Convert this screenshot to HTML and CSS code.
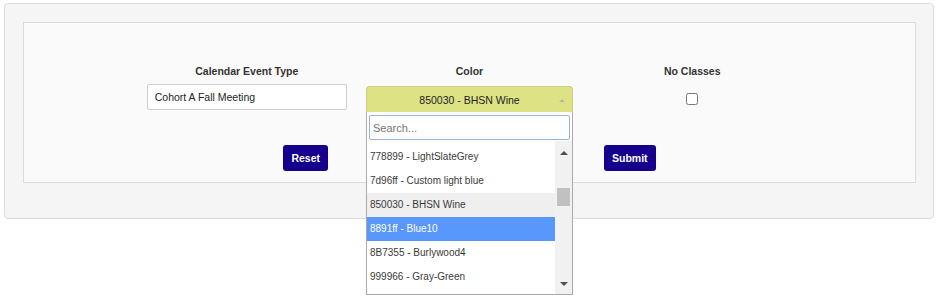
FILE: index.html
```html
<!DOCTYPE html>
<html lang="en">
<head>
    <meta charset="UTF-8">
    <meta name="viewport" content="width=device-width, initial-scale=1.0">
    <title>Calendar Event Type</title>
    <link rel="stylesheet" href="styles.css">
</head>
<body>

    <div class="panel">
        <div class="box">

            <div class="fields">

                <div class="field">
                    <label class="field-label">Calendar Event Type</label>
                    <input class="text-input" type="text" value="Cohort A Fall Meeting">
                </div>

                <div class="field">
                    <label class="field-label">Color</label>
                    <div class="select">
                        <div class="select-value">850030 - BHSN Wine <span class="select-arrow"></span></div>
                        <div class="dropdown">
                            <div class="search">
                                <input class="search-input" type="text" placeholder="Search...">
                            </div>
                            <div class="results">
                                <ul class="options">
                                    <li class="option">778899 - LightSlateGrey</li>
                                    <li class="option">7d96ff - Custom light blue</li>
                                    <li class="option is-selected">850030 - BHSN Wine</li>
                                    <li class="option is-active">8891ff - Blue10</li>
                                    <li class="option">8B7355 - Burlywood4</li>
                                    <li class="option">999966 - Gray-Green</li>
                                </ul>
                                <div class="scrollbar">
                                    <div class="sb-btn sb-up"><span class="arrow-up"></span></div>
                                    <div class="sb-track"><div class="sb-thumb"></div></div>
                                    <div class="sb-btn sb-down"><span class="arrow-down"></span></div>
                                </div>
                            </div>
                        </div>
                    </div>
                </div>

                <div class="field">
                    <label class="field-label">No Classes</label>
                    <input class="check" type="checkbox">
                </div>

            </div>

            <div class="actions">
                <button class="btn">Reset</button>
                <button class="btn">Submit</button>
            </div>

        </div>
    </div>

</body>
</html>
```

FILE: styles.css
```css
html {
    height: 100%;
}

body {
    margin: 0;
    min-height: 300px;
    box-sizing: border-box;
    padding: 3px 6px 0 4px;
    font-family: "Liberation Sans", Arial, sans-serif;
    font-size: 10.5px;
    color: #333;
    background: #fff;
}

.panel {
    width: 930px;
    box-sizing: border-box;
    background: #f5f5f5;
    border: 1px solid #dcdcdc;
    border-radius: 4px;
    padding: 18px 17px 35px 18px;
}

.box {
    background: #fafafa;
    border: 1px solid #dcdcdc;
    padding: 40px 0 11px;
}

.fields {
    display: flex;
    justify-content: center;
    align-items: flex-start;
}

.field {
    width: 25%;
    display: flex;
    flex-direction: column;
    align-items: center;
}

.field-label {
    font-weight: bold;
    line-height: 17px;
    margin-bottom: 4px;
    color: #333;
}

.text-input {
    width: 200px;
    height: 26px;
    box-sizing: border-box;
    margin: 0;
    padding: 0 7px;
    border: 1px solid #cfcfcf;
    border-radius: 2px;
    background: #fff;
    font: inherit;
    color: #222;
}

/* colour picker (select2 look) */

.select {
    position: relative;
    width: 207px;
    margin-top: 2px;
}

.select-value {
    position: relative;
    height: 26px;
    box-sizing: border-box;
    border: 1px solid #cdd17e;
    border-bottom: none;
    border-radius: 4px 4px 0 0;
    background: #dde384;
    text-align: center;
    line-height: 26px;
    color: #222;
}

.select-arrow {
    position: absolute;
    right: 7px;
    top: 12px;
    width: 0;
    height: 0;
    border-left: 3px solid transparent;
    border-right: 3px solid transparent;
    border-bottom: 3px solid #b5b5b5;
}

.dropdown {
    position: absolute;
    top: 100%;
    left: 0;
    right: 0;
    z-index: 10;
    background: #fff;
    border: 1px solid #aaa;
    border-top: none;
}

.search {
    padding: 3px 2px 1px;
}

.search-input {
    display: block;
    width: 100%;
    height: 25px;
    box-sizing: border-box;
    margin: 0;
    padding: 0 3px;
    border: 1px solid #98b4d6;
    border-radius: 2px;
    font: inherit;
    font-size: 11px;
    color: #333;
    outline: none;
}

.search-input::placeholder {
    color: #757575;
}

.results {
    display: flex;
    height: 153px;
    overflow: hidden;
}

.options {
    flex: 1;
    list-style: none;
    margin: 0;
    padding: 4px 0 0;
    font-size: 10px;
}

.option {
    height: 24px;
    line-height: 24px;
    padding-left: 3px;
    color: #3a3a3a;
    white-space: nowrap;
}

.option.is-selected {
    background: #efefef;
}

.option.is-active {
    background: #5897fb;
    color: #fff;
}

.scrollbar {
    width: 17px;
    display: flex;
    flex-direction: column;
    background: #f1f1f1;
}

.sb-btn {
    display: flex;
    justify-content: center;
    align-items: center;
}

.sb-up {
    height: 24px;
}

.sb-down {
    height: 20px;
}

.sb-track {
    flex: 1;
}

.sb-thumb {
    width: 13px;
    height: 18px;
    margin: 23px auto 0;
    background: #c1c1c1;
}

.arrow-up,
.arrow-down {
    width: 0;
    height: 0;
    border-left: 4px solid transparent;
    border-right: 4px solid transparent;
}

.arrow-up {
    border-bottom: 4px solid #505050;
}

.arrow-down {
    border-top: 4px solid #505050;
}

.check {
    width: 12px;
    height: 12px;
    margin: 9px 0 0;
}

.actions {
    display: flex;
    justify-content: center;
    gap: 276px;
    margin-top: 33px;
}

.btn {
    height: 26px;
    padding: 0 8px;
    border: none;
    border-radius: 3px;
    background: #14008c;
    color: #fff;
    font: bold 10.5px "Liberation Sans", Arial, sans-serif;
}
```
